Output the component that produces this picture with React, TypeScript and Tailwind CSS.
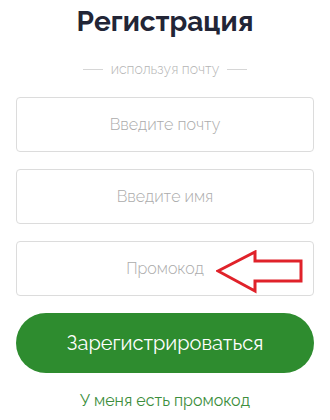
import React from "react";

const fields = ["Введите почту", "Введите имя"];

function Arrow() {
  return (
    <svg
      className="pointer-events-none absolute left-[199px] top-[8px]"
      width="90"
      height="44"
      viewBox="0 0 90 44"
      fill="none"
    >
      <path
        d="M2 21 L39 2 L39 11 L85 11 L85 31 L39 31 L39 41 Z"
        stroke="#e0222a"
        strokeWidth="3"
        strokeLinejoin="miter"
      />
    </svg>
  );
}

export default function App() {
  return (
    <div
      className="flex w-[330px] flex-col items-center bg-white px-4"
      style={{ fontFamily: "Raleway, Lato, 'Open Sans', sans-serif" }}
    >
      <h1 className="mt-[4px] text-[28px] font-bold leading-[36px] text-[#222536]">
        Регистрация
      </h1>

      <div className="mt-[20px] flex items-center gap-2 text-[14px] leading-[18px] text-[#b4b4b4]">
        <span className="h-px w-[20px] bg-[#d6d6d6]" />
        <span className="font-light">используя почту</span>
        <span className="h-px w-[20px] bg-[#d6d6d6]" />
      </div>

      <div className="mt-[19px] flex w-full flex-col gap-[17px]">
        {fields.map((f) => (
          <div
            key={f}
            className="flex h-[55px] items-center justify-center rounded-[4px] border border-[#dcdcdc] text-[16px] font-light text-[#ababab]"
          >
            {f}
          </div>
        ))}
        <div className="relative flex h-[55px] items-center justify-center rounded-[4px] border border-[#dcdcdc] text-[16px] font-light text-[#ababab]">
          Промокод
          <Arrow />
        </div>
      </div>

      <button className="mt-[17px] flex h-[60px] w-full items-center justify-center rounded-full bg-[#2e8c2f] text-[20px] text-white">
        Зарегистрироваться
      </button>

      <a className="mt-[18px] text-[16px] leading-[20px] text-[#3c8e3c]">
        У меня есть промокод
      </a>
    </div>
  );
}
